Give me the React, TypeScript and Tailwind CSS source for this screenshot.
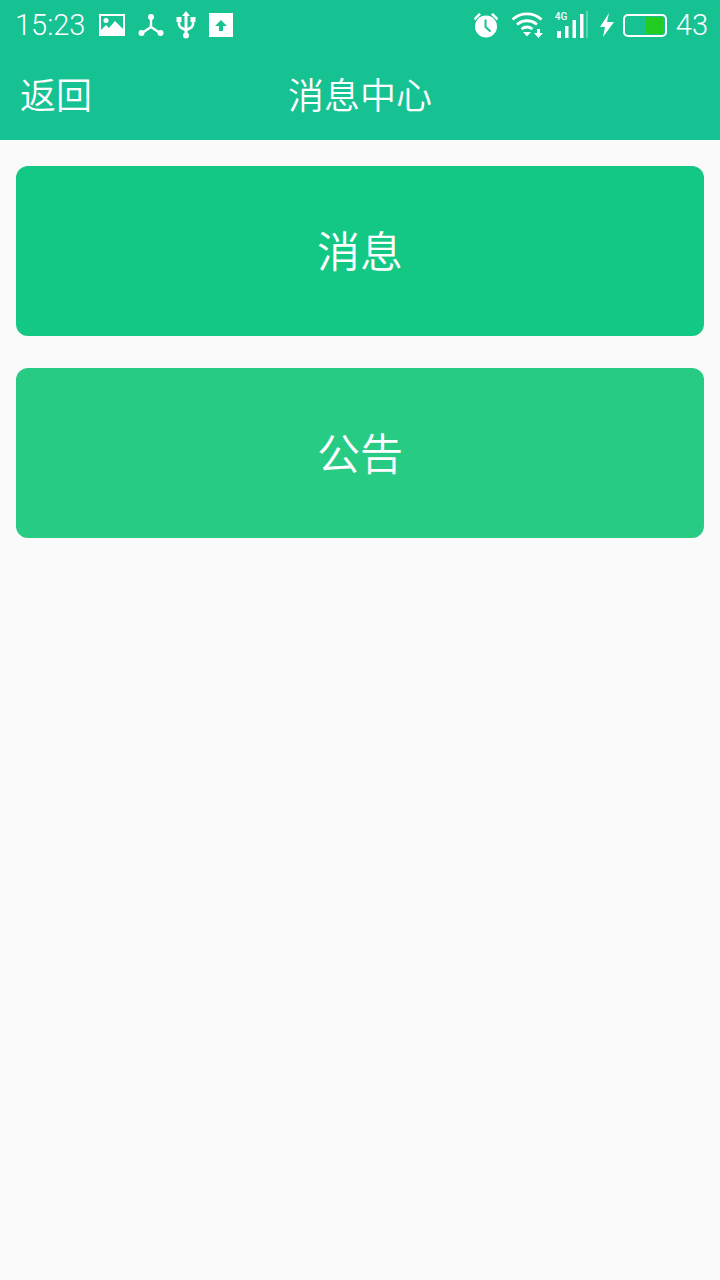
const cjk = "font-['Roboto','Noto_Sans_CJK_SC',sans-serif]";

function PictureIcon() {
    return (
        <svg width="26" height="22" viewBox="0 0 26 22" className="ml-[14px]">
            <path fill="#fff" fillRule="evenodd" d="M0 0h26v22H0zM2 2v14l5-5 3 3 6-7 8 8V2zM7 4a2.500 2.500 0 1 1 0 5 2.500 2.500 0 0 1 0-5z" />
        </svg>
    );
}

function HubIcon() {
    return (
        <svg width="26" height="24" viewBox="0 0 26 24" className="ml-[13px]">
            <g stroke="#fff" strokeWidth="2.400" fill="none">
                <path d="M13 4v10M13 14l-9 6M13 14l9 6" />
            </g>
            <circle cx="13" cy="4" r="3" fill="#fff" />
            <circle cx="3.500" cy="20" r="3" fill="#fff" />
            <circle cx="22.500" cy="20" r="3" fill="#fff" />
        </svg>
    );
}

function UsbIcon() {
    return (
        <svg width="20" height="28" viewBox="0 0 20 28" className="ml-[12px]">
            <path fill="#fff" d="M10 0l4 5h-2.500v17h-3V5H6z" />
            <circle cx="10" cy="24.500" r="3" fill="#fff" />
            <path stroke="#fff" strokeWidth="2.600" fill="none" d="M3 9v4c0 3 2 4 7 6c5-2 7-3 7-6V9" />
            <rect x="0.500" y="6" width="5" height="5" fill="#fff" />
            <rect x="14.500" y="6" width="5" height="5" fill="#fff" />
        </svg>
    );
}

function UploadIcon() {
    return (
        <svg width="24" height="24" viewBox="0 0 24 24" className="ml-[13px]">
            <path fill="#fff" fillRule="evenodd" d="M0 0h24v24H0zM12 7l-6 6h4v5h4v-5h4z" />
        </svg>
    );
}

function AlarmIcon() {
    return (
        <svg width="26" height="26" viewBox="0 0 26 26">
            <circle cx="13" cy="14.500" r="11" fill="#fff" />
            <path d="M12.500 7.500v7.500l5 4.500" stroke="#16c192" strokeWidth="2" fill="none" />
            <path fill="#fff" d="M1 6l5-5 2 1.500-6 6zM25 6l-5-5-2 1.500 6 6z" />
        </svg>
    );
}

function WifiIcon() {
    return (
        <svg width="34" height="28" viewBox="0 0 34 28" className="ml-[12px]">
            <g stroke="#fff" strokeWidth="2.800" fill="none">
                <path d="M1.500 8.500C10 1 22 1 30.500 8.500" />
                <path d="M6 13.500c6-5 14-5 20 0" />
                <path d="M10.500 18c3.500-2.600 7.500-2.600 11 0" />
            </g>
            <path fill="#fff" d="M12 21h8l-4 4.500z" />
            <path fill="#fff" d="M26 18h3v4h3l-4.500 5-4.500-5h3z" />
        </svg>
    );
}

function SignalIcon() {
    return (
        <div className="relative ml-[10px] h-[28px] w-[34px]">
            <span className="absolute left-0 top-0 font-['Roboto',sans-serif] text-[10px] font-medium leading-[11px] text-white">4G</span>
            <svg width="34" height="28" viewBox="0 0 34 28" className="absolute left-0 top-0">
                <rect x="2" y="20" width="4" height="7" fill="#fff" />
                <rect x="10" y="15" width="3.500" height="12" fill="#fff" />
                <rect x="17.500" y="9" width="3.500" height="18" fill="#fff" />
                <rect x="25" y="3" width="3.500" height="24" fill="#fff" />
                <rect x="31" y="0" width="2" height="27" fill="#fff" fillOpacity="0.3" />
            </svg>
        </div>
    );
}

function BoltIcon() {
    return (
        <svg width="16" height="24" viewBox="0 0 16 24" className="ml-[10px]">
            <path fill="#fff" d="M10 0L1 14h5l-2 10 11-15H8z" />
        </svg>
    );
}

function Battery() {
    return (
        <div className="ml-[8px] flex h-[23px] w-[44px] justify-end rounded-[5px] border-2 border-white py-[1px] pr-[2px]">
            <div className="w-[17px] bg-[#22cc22]" />
        </div>
    );
}

function StatusBar() {
    return (
        <div className="flex h-[50px] items-center pl-[15px] pr-[12px] text-white">
            <span className="font-['Roboto',sans-serif] text-[29px] font-light leading-none">15:23</span>
            <PictureIcon />
            <HubIcon />
            <UsbIcon />
            <UploadIcon />
            <div className="ml-auto flex items-center">
                <AlarmIcon />
                <WifiIcon />
                <SignalIcon />
                <BoltIcon />
                <Battery />
                <span className="ml-[9px] font-['Roboto',sans-serif] text-[29px] font-light leading-none">43</span>
            </div>
        </div>
    );
}

export default function App() {
    return (
        <div className={`flex min-h-[1280px] flex-col bg-[#fafafa] ${cjk}`}>
            <header className="bg-[#16c192]">
                <StatusBar />
                <div className="relative flex h-[90px] items-center justify-center pt-[4px] text-white">
                    <span className="absolute left-[20px] text-[36px] font-[350] leading-none">返回</span>
                    <h1 className="text-[36px] font-[350] leading-none">消息中心</h1>
                </div>
            </header>

            <div className="flex flex-col gap-[32px] px-[16px] pt-[26px]">
                <button className="flex h-[170px] items-center justify-center rounded-[12px] bg-[#12c884] pt-[4px] text-[43px] font-[350] leading-none text-white">
                    消息
                </button>
                <button className="flex h-[170px] items-center justify-center rounded-[12px] bg-[#28cb84] pt-[4px] text-[43px] font-[350] leading-none text-white">
                    公告
                </button>
            </div>
        </div>
    );
}
